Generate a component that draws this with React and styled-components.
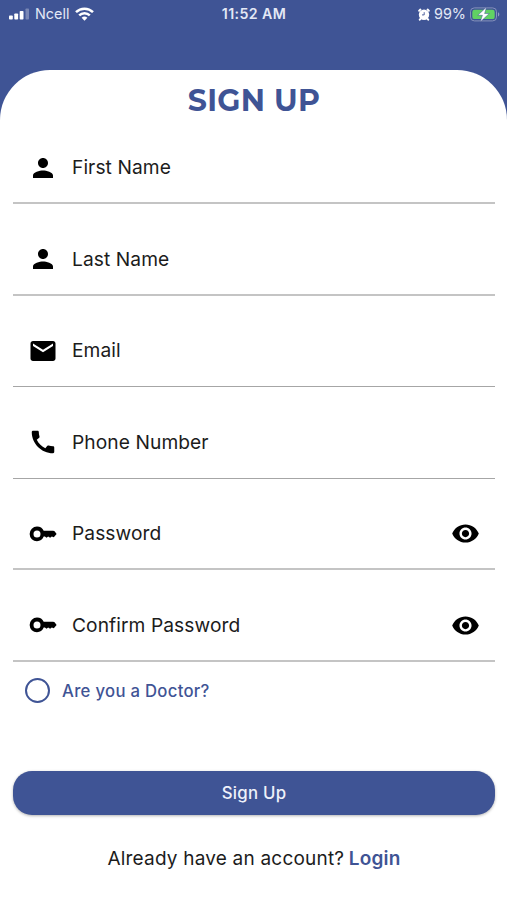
import React, { Component } from 'react'
import styled, { createGlobalStyle } from 'styled-components'
import { MdPerson, MdEmail, MdCall, MdRemoveRedEye } from 'react-icons/md'

const blue = '#3f5495'

const GlobalStyle = createGlobalStyle`
    * { box-sizing: border-box; }
    body {
        margin: 0;
        background: ${blue};
        font-family: Inter, 'Liberation Sans', sans-serif;
    }
`

const StyledScreen = styled.div`
    width: 507px;
    height: 900px;
    display: flex;
    flex-direction: column;
    overflow: hidden;
    background: ${blue};
`

const StyledStatusBar = styled.header`
    height: 70px;
    padding: 5px 7px 0 9px;
    display: grid;
    grid-template-columns: 1fr auto 1fr;
    align-items: start;
    color: #e3e8f5;
    font-size: 14.4px;
    line-height: 18px;
    white-space: nowrap;
`

const StyledStatusGroup = styled.div`
    height: 18px;
    display: flex;
    align-items: center;
    justify-content: ${(props) => (props.$end ? 'flex-end' : 'flex-start')};
    gap: ${(props) => (props.$end ? 4 : 6)}px;
`

const StyledClock = styled.div`
    padding-right: 1px;
    font-size: 14.2px;
    font-weight: 600;
    letter-spacing: 0.4px;
`

const StyledCard = styled.main`
    flex: 1;
    padding: 0 12px 0 13px;
    display: flex;
    flex-direction: column;
    background: #fff;
    border-radius: 50px 50px 0 0;
`

const StyledTitle = styled.h1`
    margin: 0;
    padding-top: 14px;
    height: 60px;
    color: ${blue};
    font-family: Montserrat, Inter, sans-serif;
    font-size: 30px;
    font-weight: 700;
    line-height: 34px;
    letter-spacing: 0.3px;
    text-align: center;
`

const StyledField = styled.label`
    height: ${(props) => (props.$first ? 74 : 91.6)}px;
    padding: 0 15px ${(props) => (props.$hairline ? 21 : 20)}px 15px;
    display: flex;
    flex-shrink: 0;
    align-items: flex-end;
    border-bottom: ${(props) => (props.$hairline ? '1px solid #a6a6a6' : '2px solid #c4c4c4')};
    color: #1c1c1c;
    font-size: 19.2px;
    line-height: 30px;
    letter-spacing: 0.07px;
    svg { display: block; color: #000; }
`

const StyledIcon = styled.span`
    width: 29px;
    height: 29px;
    display: flex;
    align-items: center;
    justify-content: center;
    svg { flex-shrink: 0; }
`

const StyledFieldText = styled.span`
    flex: 1;
    padding-left: 15px;
`

const StyledDoctor = styled.label`
    margin-top: 16px;
    padding-left: 12px;
    height: 26px;
    display: flex;
    align-items: center;
    gap: 12px;
    color: ${blue};
    font-size: 16.7px;
    font-weight: 500;
    letter-spacing: 0.3px;
`

const StyledRadio = styled.span`
    width: 25px;
    height: 25px;
    border: 2.5px solid ${blue};
    border-radius: 50%;
`

const StyledButton = styled.button`
    margin-top: 67px;
    height: 44px;
    flex-shrink: 0;
    border: 0;
    border-radius: 19px;
    background: ${blue};
    box-shadow: 0 1px 3px rgba(0, 0, 0, 0.3);
    color: #eef1fa;
    font: 500 16.8px Inter, 'Liberation Sans', sans-serif;
    letter-spacing: 0.25px;
`

const StyledFooter = styled.p`
    margin: 31px 0 0;
    color: #1c1c1c;
    font-size: 19px;
    line-height: 26px;
    letter-spacing: 0.2px;
    text-align: center;
`

const StyledLogin = styled.a`
    margin-left: -1px;
    color: ${blue};
    font-weight: 600;
`

const Signal = () => (
    <svg width="20" height="12" viewBox="0 0 20 12" fill="#fff">
        <rect x="0" y="7.5" width="3.8" height="4" rx="0.8" />
        <rect x="5.3" y="5.5" width="3.8" height="6" rx="0.8" />
        <rect x="10.7" y="3" width="3.8" height="8.5" rx="0.8" />
        <rect x="16.5" y="0.5" width="3.5" height="11" rx="0.8" opacity="0.3" />
    </svg>
)

const Wifi = () => (
    <svg width="19" height="14" viewBox="0 0 19 14" fill="none" stroke="#fff" strokeWidth="2.5">
        <path d="M1 5.1a12.2 12.2 0 0 1 17 0M4.2 8.4a7.6 7.6 0 0 1 10.6 0" />
        <path d="M9.5 13.7 6.6 10.8a4.2 4.2 0 0 1 5.8 0z" fill="#fff" stroke="none" />
    </svg>
)

const Alarm = () => (
    <svg width="12" height="13" viewBox="0 0 12 13">
        <circle cx="6" cy="6.7" r="5.2" fill="#fff" />
        <path d="M1.2 2.7 2.4 1.6M10.8 2.7 9.6 1.6M2.4 11l-.6.7M9.6 11l.6.7" stroke="#fff" strokeWidth="2" strokeLinecap="round" />
        <path d="M6.2 4.2v2.7H4" fill="none" stroke={blue} strokeWidth=".9" />
    </svg>
)

const Battery = () => (
    <svg width="30" height="15" viewBox="0 0 30 15">
        <rect x=".5" y=".9" width="26" height="13" rx="3.8" fill="none" stroke="#8591bb" />
        <rect x="2.3" y="2.7" width="22.4" height="9.4" rx="2.2" fill="#61d263" />
        <path d="M28 5.3c1.8.6 1.8 3.6 0 4.2z" fill="#929dc3" />
        <path d="M16.6 0 7.8 8.3h4.6L10.2 15l9.1-8.5h-4.7z" fill="#fff" stroke={blue} strokeWidth=".5" />
    </svg>
)

const Key = () => (
    <svg width="28" height="16" viewBox="0 0 28 16">
        <path
            fillRule="evenodd"
            d="M8 .6c3.1 0 5.6 1.6 6.7 4.1h9.5c.6 0 1 .2 1.4.6L27.6 8l-2.8 3.3-2-.8-1.7 1.3-1.9-1.3-1.7 1.2-1.6-1.1h-1.2c-1.1 2.8-3.7 4.7-6.7 4.7A7.3 7.3 0 0 1 8 .6zm0 3.8a3.5 3.5 0 1 0 0 7 3.5 3.5 0 0 0 0-7z"
        />
    </svg>
)

const fields = [
    { label: 'First Name', icon: <MdPerson size={30} /> },
    { label: 'Last Name', icon: <MdPerson size={30} /> },
    { label: 'Email', icon: <MdEmail size={30} />, hairline: true },
    { label: 'Phone Number', icon: <MdCall size={30} />, hairline: true },
    { label: 'Password', icon: <Key />, secret: true },
    { label: 'Confirm Password', icon: <Key />, secret: true }
]

class App extends Component {
    renderFields() {
        return fields.map(({ label, icon, hairline, secret }, ix) => (
            <StyledField key={label} $first={ix === 0} $hairline={hairline}>
                <StyledIcon>{icon}</StyledIcon>
                <StyledFieldText>{label}</StyledFieldText>
                {secret && <StyledIcon><MdRemoveRedEye size={29} /></StyledIcon>}
            </StyledField>
        ))
    }

    render() {
        return (
            <StyledScreen>
                <GlobalStyle />
                <StyledStatusBar>
                    <StyledStatusGroup>
                        <Signal />
                        <span>Ncell</span>
                        <Wifi />
                    </StyledStatusGroup>
                    <StyledClock>11:52 AM</StyledClock>
                    <StyledStatusGroup $end>
                        <Alarm />
                        <span>99%</span>
                        <Battery />
                    </StyledStatusGroup>
                </StyledStatusBar>
                <StyledCard>
                    <StyledTitle>SIGN UP</StyledTitle>
                    {this.renderFields()}
                    <StyledDoctor>
                        <StyledRadio />
                        <span>Are you a Doctor?</span>
                    </StyledDoctor>
                    <StyledButton type="button">Sign Up</StyledButton>
                    <StyledFooter>
                        Already have an account? <StyledLogin>Login</StyledLogin>
                    </StyledFooter>
                </StyledCard>
            </StyledScreen>
        )
    }
}

export default App
